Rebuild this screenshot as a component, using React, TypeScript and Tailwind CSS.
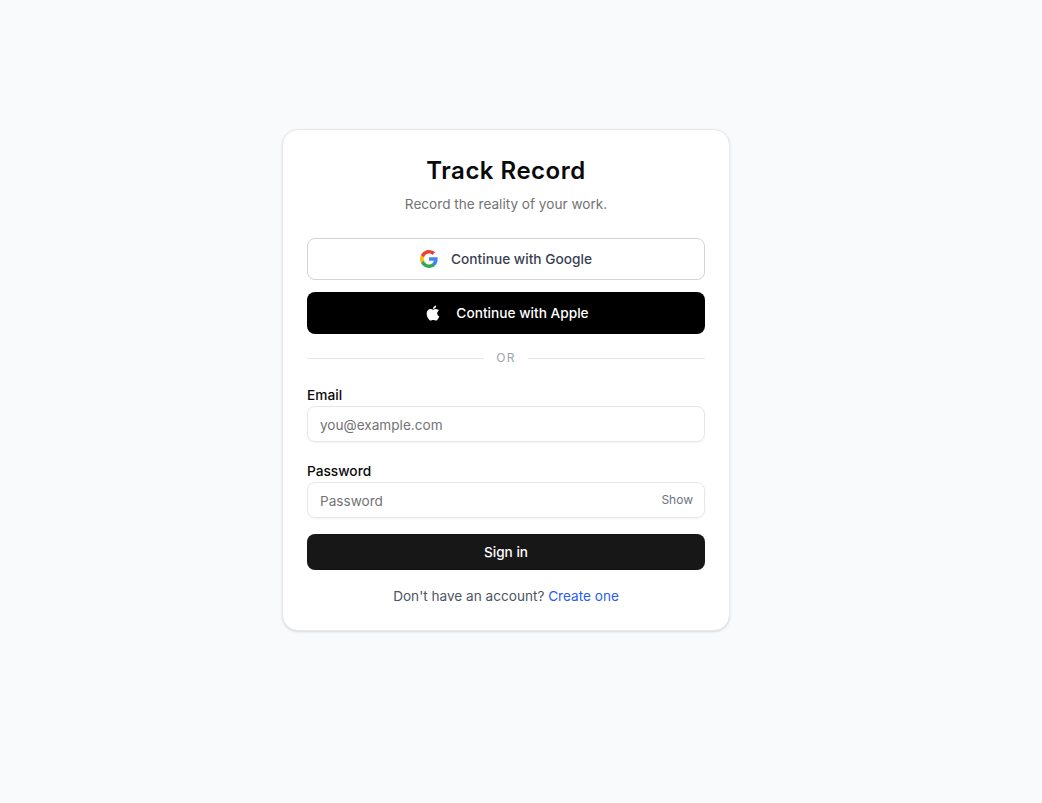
import { useState } from "react";

function GoogleIcon() {
    return (
        <svg className="w-[18px] h-[18px]" viewBox="1 1 22 22">
            <path fill="#4285F4" d="M22.56 12.25c0-.78-.07-1.53-.2-2.25H12v4.26h5.92c-.26 1.37-1.04 2.53-2.21 3.31v2.77h3.57c2.08-1.92 3.28-4.74 3.28-8.09z" />
            <path fill="#34A853" d="M12 23c2.97 0 5.46-.98 7.28-2.66l-3.57-2.77c-.98.66-2.23 1.06-3.71 1.06-2.86 0-5.29-1.93-6.16-4.53H2.18v2.84C3.99 20.53 7.7 23 12 23z" />
            <path fill="#FBBC05" d="M5.84 14.09c-.22-.66-.35-1.36-.35-2.09s.13-1.43.35-2.09V7.07H2.18C1.43 8.55 1 10.22 1 12s.43 3.45 1.18 4.93l2.85-2.22.81-.62z" />
            <path fill="#EA4335" d="M12 5.38c1.62 0 3.06.56 4.21 1.64l3.15-3.15C17.45 2.09 14.97 1 12 1 7.7 1 3.99 3.47 2.18 7.07l3.66 2.84c.87-2.6 3.3-4.53 6.16-4.53z" />
        </svg>
    );
}

function AppleIcon() {
    return (
        <svg className="w-5 h-5" viewBox="0 0 24 24" fill="#fff">
            <path d="M17.05 20.28c-.98.95-2.05.8-3.08.35-1.09-.46-2.09-.48-3.24 0-1.44.62-2.2.44-3.06-.35C2.79 15.25 3.51 7.59 9.05 7.31c1.35.07 2.29.74 3.08.8 1.18-.24 2.31-.93 3.57-.84 1.51.12 2.65.72 3.4 1.8-3.12 1.87-2.38 5.98.48 7.13-.57 1.5-1.31 2.99-2.54 4.09zM12.03 7.25c-.15-2.23 1.66-4.07 3.74-4.25.29 2.58-2.34 4.5-3.74 4.25z" />
        </svg>
    );
}

export default function App() {
    const [show, setShow] = useState(false);

    return (
        <div className="min-h-screen bg-[#f9fafb] flex justify-center pt-[129px] pr-[30px] font-['Inter',sans-serif]">
            <div className="w-[448px] h-[502px] bg-white border border-[#e5e7eb] rounded-2xl shadow-sm px-6 pt-6">
                <div className="text-center">
                    <h1 className="text-2xl leading-[34px] tracking-[0.5px] font-semibold text-[#0a0a0a]">Track Record</h1>
                    <p className="mt-[6px] text-[13.6px] leading-5 text-[#737373]">Record the reality of your work.</p>
                </div>

                <div className="mt-6 flex flex-col gap-3">
                    <button className="h-[42px] flex items-center justify-center gap-[13px] rounded-lg border border-[#d1d5db] bg-white text-[13.7px] font-medium text-[#374151]">
                        <GoogleIcon />
                        Continue with Google
                    </button>
                    <button className="h-[42px] flex items-center justify-center gap-[13px] rounded-lg bg-black text-[13.7px] font-medium text-white">
                        <AppleIcon />
                        Continue with Apple
                    </button>
                </div>

                <div className="mt-4 h-[16px] flex items-center gap-3">
                    <div className="flex-1 h-px bg-[#e5e7eb]"></div>
                    <span className="text-xs tracking-[0.1em] text-[#9ca3af]">OR</span>
                    <div className="flex-1 h-px bg-[#e5e7eb]"></div>
                </div>

                <div className="mt-[19px]">
                    <label className="block text-[13.7px] leading-5 font-medium text-[#0a0a0a]">Email</label>
                    <input
                        type="email"
                        placeholder="you@example.com"
                        className="mt-px block w-full h-9 px-3 pt-[2px] rounded-lg border border-[#e5e7eb] shadow-xs text-[13.6px] outline-none placeholder:text-[#737373]"
                    />
                </div>

                <div className="mt-[19px]">
                    <label className="block text-[13.7px] leading-5 font-medium text-[#0a0a0a]">Password</label>
                    <div className="relative mt-px">
                        <input
                            type={show ? "text" : "password"}
                            placeholder="Password"
                            className="block w-full h-9 pl-3 pr-14 pt-[2px] rounded-lg border border-[#e5e7eb] shadow-xs text-[13.6px] outline-none placeholder:text-[#737373]"
                        />
                        <button
                            type="button"
                            onClick={() => setShow(!show)}
                            className="absolute right-3 top-1/2 -translate-y-1/2 text-xs text-[#6b7280]"
                        >
                            Show
                        </button>
                    </div>
                </div>

                <button className="mt-4 w-full h-9 rounded-lg bg-[#171717] text-[13.6px] font-medium text-white">Sign in</button>

                <p className="mt-4 text-center text-[13.6px] leading-5 text-[#4b5563]">
                    Don't have an account? <a href="#" className="text-[#2a5bf5]">Create one</a>
                </p>
            </div>
        </div>
    );
}
